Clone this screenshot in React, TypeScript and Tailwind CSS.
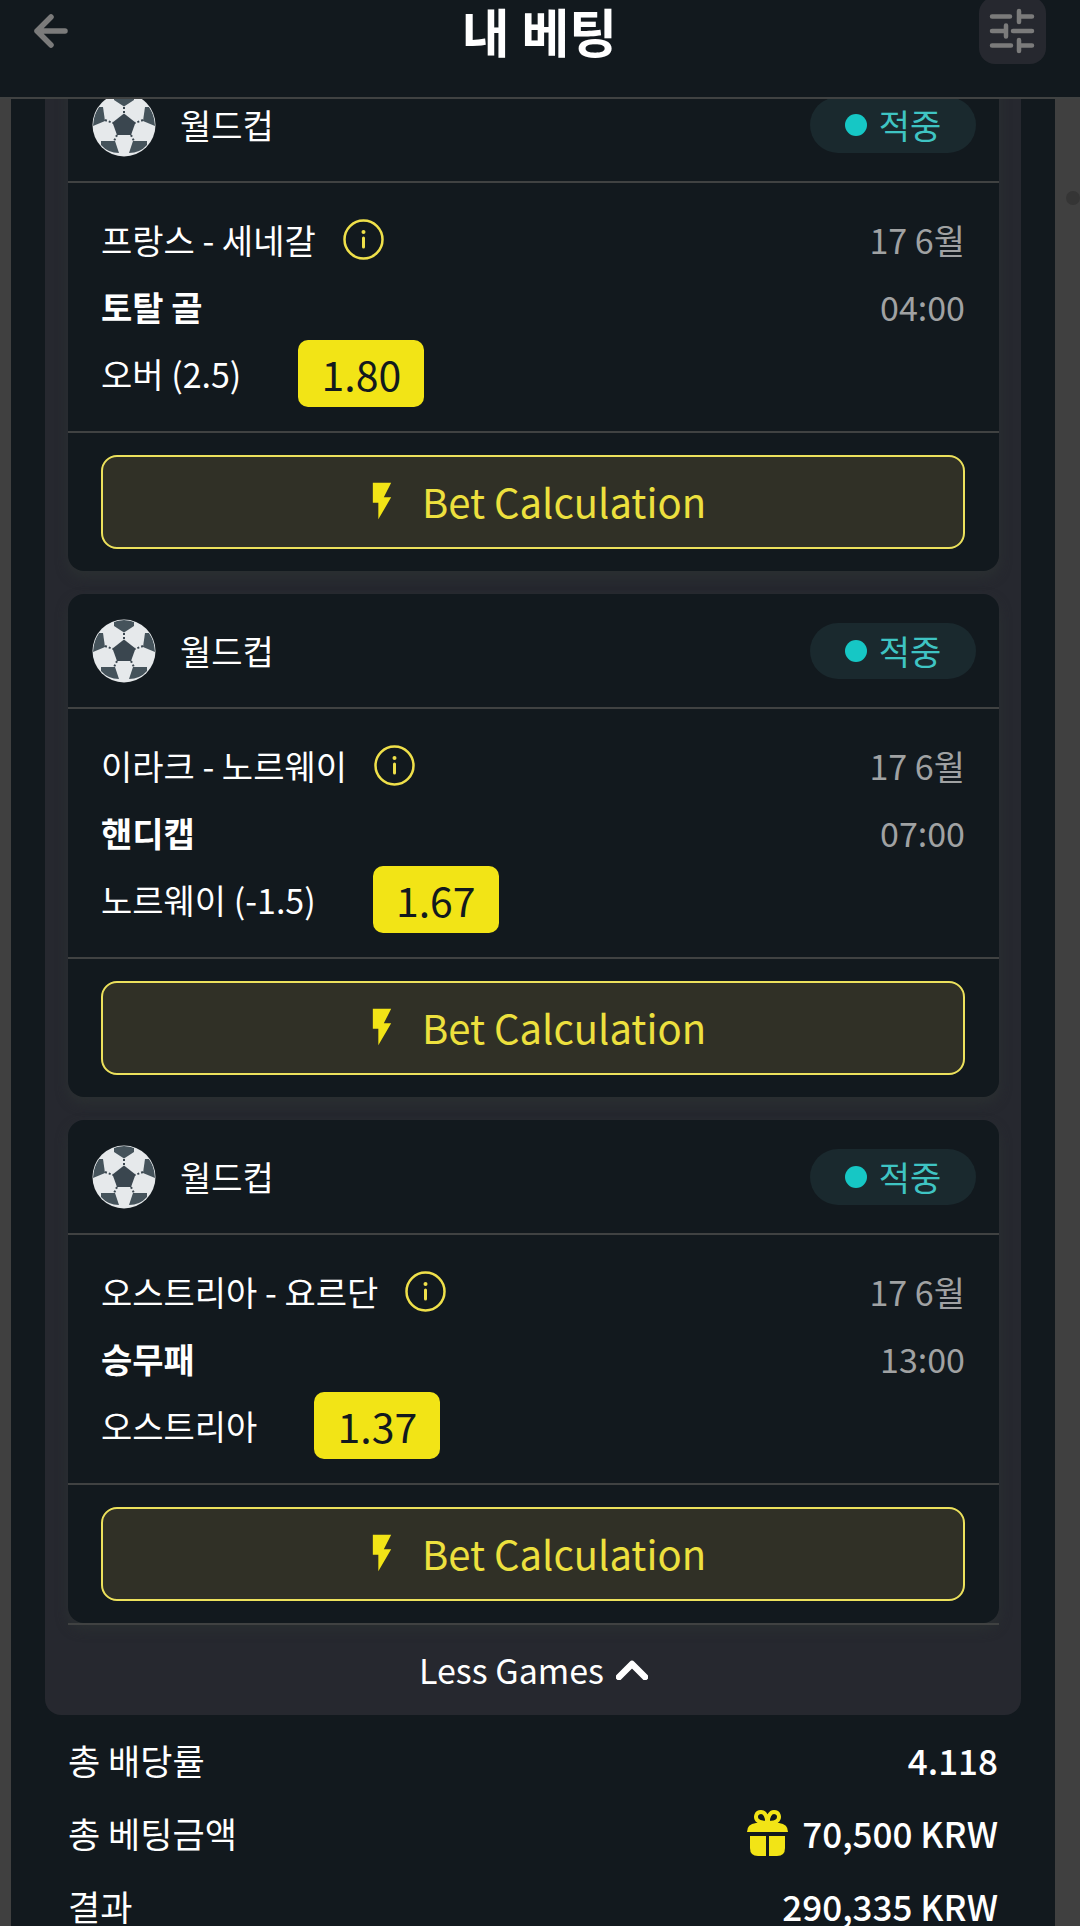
import React from "react";
import { MdFlashOn } from "react-icons/md";

interface Bet {
  league: string;
  match: string;
  market: string;
  pick: string;
  odds: string;
  date: string;
  time: string;
}

const betList: Bet[] = [
  {
    league: "월드컵",
    match: "프랑스 - 세네갈",
    market: "토탈 골",
    pick: "오버 (2.5)",
    odds: "1.80",
    date: "17 6월",
    time: "04:00",
  },
  {
    league: "월드컵",
    match: "이라크 - 노르웨이",
    market: "핸디캡",
    pick: "노르웨이 (-1.5)",
    odds: "1.67",
    date: "17 6월",
    time: "07:00",
  },
  {
    league: "월드컵",
    match: "오스트리아 - 요르단",
    market: "승무패",
    pick: "오스트리아",
    odds: "1.37",
    date: "17 6월",
    time: "13:00",
  },
];

function BackIcon() {
  return (
    <svg className="w-9 h-9" viewBox="0 0 36 36" fill="none" stroke="currentColor" strokeWidth="5.500" strokeLinecap="round" strokeLinejoin="round">
      <path d="M32 18H4M18 4L4 18l14 14" />
    </svg>
  );
}

function FilterIcon() {
  return (
    <svg className="w-[46px] h-[46px]" viewBox="0 0 46 46" fill="none" stroke="currentColor" strokeWidth="4.500" strokeLinecap="round">
      <path d="M3 8.500H21M30 8.500H43M30 3V14M3 23H16M17 17.500V28.500M24 23H43M3 37.500H22M30 37.500H43M30 32V43" />
    </svg>
  );
}

function BallIcon() {
  return (
    <svg className="w-16 h-16" viewBox="0 0 64 64">
      <clipPath id="ball">
        <circle cx="32" cy="32" r="31" />
      </clipPath>
      <circle cx="32" cy="32" r="31.500" fill="#e6e9eb" />
      <g clipPath="url(#ball)" fill="#45535b">
        <path d="M22 3q10-4 20 0v4l-10 6.500L22 7z" />
        <path d="M11 14l2 14-12 5q0-10 6-19z" />
        <path d="M53 14l-2 14 12 5q0-10-6-19z" />
        <path d="M9 48h14l4 12q-11 0-18-8z" />
        <path d="M55 48H41l-4 12q11 0 18-8z" />
        <path d="M32 20.500l11.500 9L39 42H25l-4.500-12.500z" fill="#3a464f" />
      </g>
      <path d="M32 14v7M13 27l8 3M51 27l-8 3M25 42l-3 6M39 42l3 6" stroke="#3a464f" strokeWidth="2" strokeDasharray="2 2" />
    </svg>
  );
}

function InfoIcon() {
  return (
    <svg className="w-[41px] h-[41px]" viewBox="0 0 41 41" fill="none" stroke="currentColor" strokeLinecap="round">
      <circle cx="20.500" cy="20.500" r="19" strokeWidth="2.500" />
      <path d="M20.500 19v9" strokeWidth="3" />
      <circle cx="20.500" cy="13" r="2" fill="currentColor" stroke="none" />
    </svg>
  );
}

function GiftIcon() {
  return (
    <svg className="w-[41px] h-[46px]" viewBox="0 0 41 46" fill="currentColor">
      <path d="M0 22q0-8 9-9h23q9 1 9 9z" />
      <path d="M3 26h16v20h-8q-8 0-8-8z" />
      <path d="M38 26H22v20h8q8 0 8-8z" />
      <path
        d="M20 13C20.500 7 18 2 14 2c-5 0-6 5-4 8 2 2.500 6 3 10 3zM21 13C20.500 7 23 2 27 2c5 0 6 5 4 8-2 2.500-6 3-10 3z"
        fill="none"
        stroke="currentColor"
        strokeWidth="4"
        strokeLinejoin="round"
      />
    </svg>
  );
}

function BetCard({ bet }: { bet: Bet }) {
  return (
    <article className="rounded-2xl bg-[#12191e] shadow-[0_6px_12px_#2b3032]">
      <div className="h-[115px] border-b-2 border-[#404242] pl-6 pr-[23px] flex items-center justify-between">
        <div className="flex items-center gap-6">
          <BallIcon />
          <span>{bet.league}</span>
        </div>
        <div className="w-[166px] h-14 rounded-full bg-[#1a292e] text-[#3fc4c3] flex items-center justify-center gap-3">
          <span className="w-[22px] h-[22px] rounded-full bg-[#16c7c5]"></span>
          <span>적중</span>
        </div>
      </div>
      <div className="h-[248px] pl-[33px] pr-[34px] pt-[23px] flex justify-between">
        <div>
          <div className="h-[67px] flex items-center gap-[27px]">
            <span>{bet.match}</span>
            <button className="text-[#efe04a]" aria-label="info">
              <InfoIcon />
            </button>
          </div>
          <div className="h-[67px] flex items-center font-bold">{bet.market}</div>
          <div className="h-[67px] flex items-center gap-[57px]">
            <span>{bet.pick}</span>
            <span className="w-[126px] h-[67px] rounded-[10px] bg-[#f2e416] text-[#12191e] text-[41px] pb-0.5 flex items-center justify-center">
              {bet.odds}
            </span>
          </div>
        </div>
        <div className="text-right text-[#a0a2a3]">
          <div className="h-[67px] flex items-center justify-end">{bet.date}</div>
          <div className="h-[67px] flex items-center justify-end">{bet.time}</div>
        </div>
      </div>
      <div className="border-t-2 border-[#404242] pl-[33px] pr-[34px] py-[22px]">
        <button className="w-full h-[94px] rounded-2xl border-2 border-[#ece15c] bg-[#303026] text-[#ede03e] text-[40px] pb-0.5 flex items-center justify-center gap-[18px]">
          <MdFlashOn className="w-11 h-11 text-[#f2e416]" />
          Bet Calculation
        </button>
      </div>
    </article>
  );
}

function App() {
  return (
    <div className="h-screen flex flex-col overflow-hidden border-b-[3px] border-white bg-[#404040] text-white text-[34px] leading-[48px] font-['Noto_Sans_CJK_KR',sans-serif]">
      <header className="h-[99px] shrink-0 border-b-2 border-[#404242] bg-[#12191e] pl-[33px] pr-[34px] pb-9 flex items-center justify-between">
        <button className="w-[67px] text-[#7b7b7b]" aria-label="back">
          <BackIcon />
        </button>
        <h1 className="text-[52px] leading-[60px] font-bold">내 베팅</h1>
        <button className="w-[67px] h-[67px] rounded-2xl bg-[#26282f] text-[#7b7b7b] flex items-center justify-center" aria-label="filter">
          <FilterIcon />
        </button>
      </header>
      <main className="relative flex-1 min-h-0 overflow-hidden pl-[11px] pr-[25px]">
        <div className="bg-[#12191e] px-[34px] pb-10">
          <section className="-mt-[31px] rounded-b-2xl bg-[#26282f] pl-[23px] pr-[22px]">
            <div className="flex flex-col gap-[23px]">
              {betList.map((bet) => (
                <BetCard key={bet.match} bet={bet} />
              ))}
            </div>
            <button className="relative w-full h-[92px] border-t-2 border-[#404242] flex items-center justify-center gap-3">
              Less Games
              <svg className="w-8 h-5" viewBox="0 0 32 20" fill="none" stroke="currentColor" strokeWidth="6.500" strokeLinecap="round" strokeLinejoin="round">
                <path d="M3 17L16 4l13 13" />
              </svg>
            </button>
          </section>
          <dl className="px-[23px] pt-2 text-[35px]">
            <div className="h-[73px] flex items-center justify-between">
              <dt>총 배당률</dt>
              <dd className="font-medium">4.118</dd>
            </div>
            <div className="h-[73px] flex items-center justify-between">
              <dt>총 베팅금액</dt>
              <dd className="font-medium flex items-center gap-[14px]">
                <span className="text-[#f2e416]">
                  <GiftIcon />
                </span>
                70,500 KRW
              </dd>
            </div>
            <div className="h-[73px] flex items-center justify-between">
              <dt>결과</dt>
              <dd className="font-medium">290,335 KRW</dd>
            </div>
          </dl>
        </div>
        <div className="absolute right-0 top-[92px] w-[14px] h-[14px] rounded-full bg-[#353535]"></div>
      </main>
    </div>
  );
}

export default App;
